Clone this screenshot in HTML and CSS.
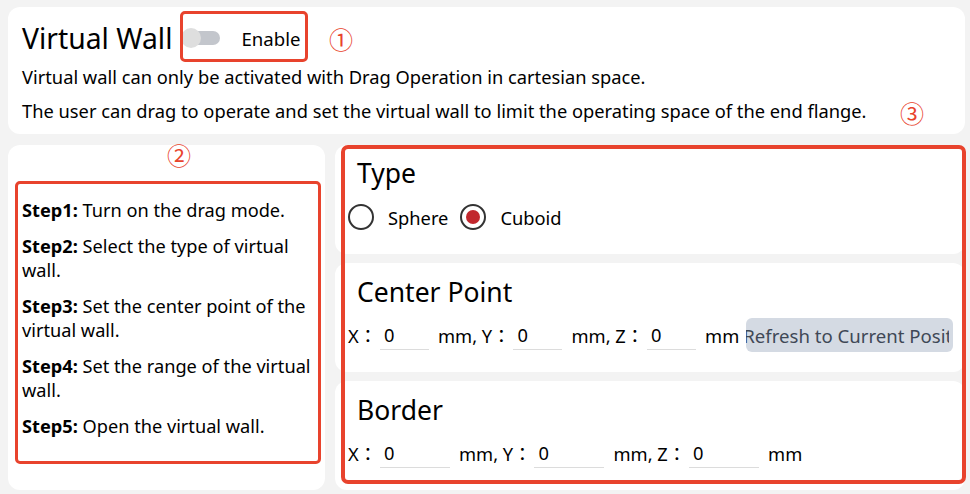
FILE: index.html
```html
<!DOCTYPE html>
<html lang="en">
<head>
  <meta charset="UTF-8">
  <meta name="viewport" content="width=device-width, initial-scale=1.0">
  <title>Virtual Wall</title>
  <link rel="stylesheet" href="styles.css">
</head>
<body>
  <div class="page">
    <section class="card intro">
      <div class="intro-head">
        <h1>Virtual Wall</h1>
        <label class="switch">
          <span class="switch-track"><span class="switch-knob"></span></span>
          <span class="switch-text">Enable</span>
        </label>
      </div>
      <p>Virtual wall can only be activated with Drag Operation in cartesian space.</p>
      <p>The user can drag to operate and set the virtual wall to limit the operating space of the end flange.</p>
    </section>

    <div class="main">
      <section class="card steps">
        <p><b>Step1:</b> Turn on the drag mode.</p>
        <p><b>Step2:</b> Select the type of virtual wall.</p>
        <p><b>Step3:</b> Set the center point of the virtual wall.</p>
        <p><b>Step4:</b> Set the range of the virtual wall.</p>
        <p><b>Step5:</b> Open the virtual wall.</p>
      </section>

      <div class="settings">
        <section class="card block">
          <h3 class="type-title">Type</h3>
          <div class="row">
            <label class="radio"><span class="radio-dot"></span>Sphere</label>
            <label class="radio checked"><span class="radio-dot"></span>Cuboid</label>
          </div>
        </section>

        <section class="card block">
          <h3>Center Point</h3>
          <div class="row">
            <span class="axis">X：</span>
            <input class="num" type="text" value="0">
            <span class="axis">mm, Y：</span>
            <input class="num" type="text" value="0">
            <span class="axis">mm, Z：</span>
            <input class="num" type="text" value="0">
            <span class="axis">mm</span>
            <button class="refresh"><span>Refresh to Current Position</span></button>
          </div>
        </section>

        <section class="card block">
          <h3>Border</h3>
          <div class="row">
            <span class="axis">X：</span>
            <input class="num wide" type="text" value="0">
            <span class="axis">mm, Y：</span>
            <input class="num wide" type="text" value="0">
            <span class="axis">mm, Z：</span>
            <input class="num wide" type="text" value="0">
            <span class="axis">mm</span>
          </div>
        </section>
      </div>
    </div>

    <!-- annotation marks -->
    <div class="mark box-enable"></div>
    <div class="mark box-steps"></div>
    <div class="mark box-settings"></div>
    <span class="tag tag-1">①</span>
    <span class="tag tag-2">②</span>
    <span class="tag tag-3">③</span>
  </div>
</body>
</html>
```

FILE: styles.css
```css
body {
  margin: 0;
  background: #f3f3f3;
  font-family: "Noto Sans", "Noto Sans CJK TC", sans-serif;
  color: #000;
}

.page {
  position: relative;
  padding: 7px 5px 0 8px;
  height: 494px;
  box-sizing: border-box;
}

.card {
  background: #fff;
  border-radius: 12px;
}

/* intro */
.intro {
  height: 127px;
  padding: 0 14px;
  box-sizing: border-box;
}

.intro-head {
  display: flex;
  align-items: center;
  height: 52px;
  padding-top: 5px;
}

h1 {
  margin: 0;
  font-size: 28.3px;
  font-weight: normal;
}

.switch {
  display: flex;
  align-items: center;
  margin-left: 10px;
}

.switch-track {
  position: relative;
  width: 38px;
  height: 14px;
  border-radius: 7px;
  background: #c3c6cc;
}

.switch-knob {
  position: absolute;
  left: -1px;
  top: -3px;
  width: 20px;
  height: 20px;
  border-radius: 50%;
  background: #dedede;
}

.switch-text {
  margin-left: 21px;
  font-size: 18.6px;
}

.intro p {
  margin: 0 0 10px;
  font-size: 18.3px;
  line-height: 24px;
}

.intro p:first-of-type {
  margin-top: 1px;
}

/* lower area */
.main {
  display: flex;
  gap: 10px;
  margin-top: 11px;
}

.steps {
  width: 317px;
  height: 345px;
  padding: 53px 5px 0 14px;
  box-sizing: border-box;
}

.steps p {
  margin: 0 0 12px;
  font-size: 18.2px;
  line-height: 24px;
}

.settings {
  flex: 1;
  display: flex;
  flex-direction: column;
  gap: 9px;
}

.block {
  height: 109px;
  padding: 12px 10px 0 13px;
  box-sizing: border-box;
}

h3 {
  margin: 0 0 9px 9px;
  font-size: 26.5px;
  line-height: 34px;
  font-weight: normal;
}

h3.type-title {
  margin-top: -1px;
  margin-bottom: 10px;
}

.row {
  display: flex;
  align-items: center;
  height: 34px;
  font-size: 18.3px;
}

.radio {
  display: flex;
  align-items: center;
  margin-right: 12px;
}

.radio-dot {
  width: 22px;
  height: 22px;
  border: 2px solid #333;
  border-radius: 50%;
  margin-right: 14px;
  box-sizing: content-box;
  position: relative;
}

.radio.checked .radio-dot::after {
  content: '';
  position: absolute;
  left: 4px;
  top: 4px;
  width: 14px;
  height: 14px;
  border-radius: 50%;
  background: #c1272d;
}

.axis {
  white-space: nowrap;
}

.num {
  width: 49px;
  height: 30px;
  margin: 0 9px 0 3px;
  padding: 0 0 0 4px;
  border: none;
  border-bottom: 1px solid #dcdcdc;
  font: inherit;
  outline: none;
  box-sizing: border-box;
}

.num.wide {
  width: 70px;
}

.refresh {
  width: 207px;
  height: 34px;
  margin-left: 7px;
  padding: 0 4px 0 0;
  border: none;
  border-radius: 6px;
  background: #d4dae3;
  color: #3f4856;
  font: inherit;
  font-size: 18.6px;
}

.refresh span {
  display: block;
  overflow: hidden;
  white-space: nowrap;
  text-indent: -3px;
  text-align: left;
}

/* annotation marks */
.mark {
  position: absolute;
  border: 3px solid #e8432d;
  border-radius: 5px;
  box-sizing: border-box;
}

.box-enable {
  left: 180px;
  top: 11px;
  width: 128px;
  height: 51px;
}

.box-steps {
  left: 15px;
  top: 181px;
  width: 306px;
  height: 283px;
}

.box-settings {
  left: 341px;
  top: 145px;
  width: 625px;
  height: 339px;
  border-width: 4px;
  border-radius: 7px;
}

.tag {
  position: absolute;
  color: #e8432d;
  font-family: "Noto Sans CJK SC", sans-serif;
  font-size: 24px;
  line-height: 24px;
}

.tag-1 { left: 329px; top: 27px; }
.tag-2 { left: 167px; top: 143px; }
.tag-3 { left: 900px; top: 101px; }
```
